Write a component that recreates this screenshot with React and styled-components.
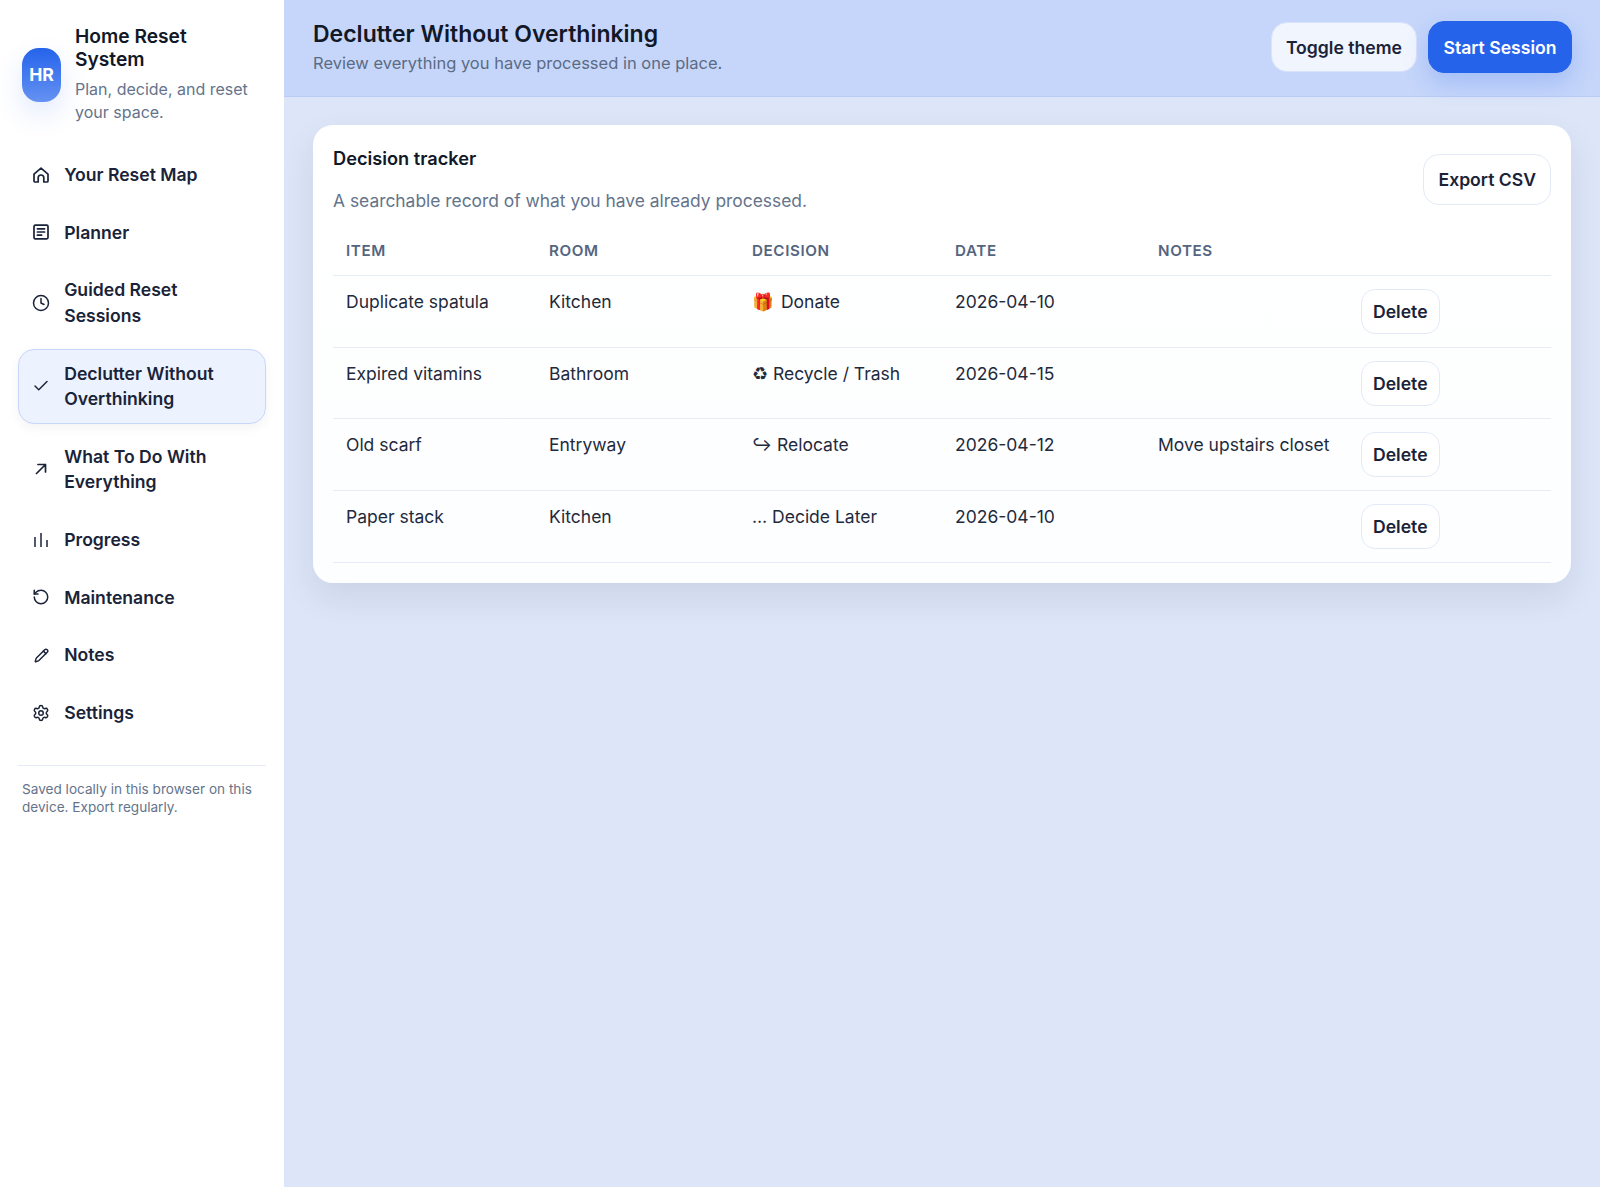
import React from 'react';
import styled, { createGlobalStyle } from 'styled-components';
import { Clock, Check, RotateCcw, Pencil, Settings } from 'lucide-react';

const GlobalStyle = createGlobalStyle`
  * { box-sizing: border-box; }
  html, body { margin: 0; padding: 0; }
  body {
    font-family: Inter, "Noto Sans", sans-serif;
    color: #0f172a;
    background: #dde6f8;
  }
`;

const Shell = styled.div`
  display: grid;
  grid-template-columns: 284px 1fr;
  min-height: 1187px;
`;

const Sidebar = styled.aside`
  background: #ffffff;
  padding: 25px 17.6px;
  display: flex;
  flex-direction: column;
`;

const Brand = styled.div`
  display: flex;
  align-items: center;
  gap: 14px;
  padding: 0 4.4px;
  margin-bottom: 26px;
`;

const LogoMark = styled.div`
  flex: 0 0 39px;
  height: 54px;
  border-radius: 17px;
  background: linear-gradient(180deg, #2563eb, #6592f2);
  box-shadow: 0 12px 28px rgba(37, 99, 235, 0.14);
  color: #fff;
  font-weight: 700;
  font-size: 17.6px;
  display: flex;
  align-items: center;
  justify-content: center;
`;

const BrandText = styled.div`
  max-width: 180px;
`;

const BrandTitle = styled.div`
  font-size: 19.2px;
  line-height: 23px;
  font-weight: 600;
  color: #111827;
`;

const BrandSub = styled.div`
  font-size: 16px;
  line-height: 23px;
  color: #64748b;
  margin-top: 7px;
`;

const Nav = styled.nav`
  display: flex;
  flex-direction: column;
  gap: 8.2px;
`;

const NavItem = styled.a`
  display: flex;
  align-items: center;
  gap: 14px;
  padding: 11px 13.6px;
  border-radius: 16px;
  border: 1px solid ${(p) => (p.$active ? '#c7d7fb' : 'transparent')};
  background: ${(p) => (p.$active ? '#ecf2fe' : 'transparent')};
  box-shadow: ${(p) => (p.$active ? '0 4px 12px rgba(15, 23, 42, 0.05)' : 'none')};
  font-size: 17.6px;
  line-height: 25.5px;
  font-weight: 600;
  color: #1a2338;
`;

const NavIcon = styled.span`
  flex: 0 0 18px;
  height: 18px;
  display: flex;
  align-items: center;
  justify-content: center;
`;

const SideFoot = styled.div`
  margin-top: 27px;
  border-top: 1px solid #e5ecf8;
  padding: 14px 4.4px 0;
  font-size: 13.6px;
  line-height: 18px;
  color: #64748b;
`;

const Main = styled.main`
  display: flex;
  flex-direction: column;
  min-width: 0;
`;

const Header = styled.header`
  height: 97px;
  background: #c6d6fa;
  border-bottom: 1px solid #b9ccf8;
  padding: 0 28px 3px 29px;
  display: flex;
  align-items: center;
  justify-content: space-between;
`;

const Title = styled.h1`
  margin: 0;
  font-size: 23px;
  line-height: 30px;
  font-weight: 600;
  color: #111827;
`;

const Subtitle = styled.p`
  margin: 3px 0 0;
  font-size: 16.5px;
  line-height: 22px;
  color: #5b6b84;
`;

const Actions = styled.div`
  display: flex;
  align-items: center;
  gap: 11px;
  margin-top: 1px;
`;

const Button = styled.button`
  font-family: inherit;
  font-weight: 600;
  font-size: 17.6px;
  height: 50px;
  padding: 0 14px;
  border-radius: 16px;
  color: #1a2338;
  background: #f1f5fe;
  border: 1px solid #d8e3fa;
`;

const PrimaryButton = styled(Button)`
  height: 52px;
  padding: 0 14.5px;
  color: #fff;
  background: #2563eb;
  border-color: #2563eb;
  box-shadow: 0 10px 24px rgba(37, 99, 235, 0.22);
`;

const Content = styled.div`
  padding: 28px 29px;
`;

const Card = styled.section`
  background: linear-gradient(180deg, #ffffff, #fdfeff);
  border-radius: 20px;
  padding: 20px;
  box-shadow: 0 14px 34px rgba(15, 23, 42, 0.09);
`;

const CardHead = styled.div`
  display: flex;
  justify-content: space-between;
  align-items: flex-start;
`;

const CardTitle = styled.h2`
  margin: 0;
  font-size: 18.2px;
  line-height: 26px;
  font-weight: 600;
  color: #111827;
`;

const CardSub = styled.p`
  margin: 18px 0 0;
  font-size: 17.4px;
  line-height: 24px;
  color: #64748b;
`;

const ExportButton = styled(Button)`
  margin-top: 9px;
  height: 51px;
  background: #fff;
  border-color: #e3eaf7;
`;

const Table = styled.table`
  width: 100%;
  table-layout: fixed;
  border-collapse: collapse;
  margin-top: 14px;
`;

const Th = styled.th`
  text-align: left;
  font-size: 15.2px;
  line-height: 20px;
  font-weight: 600;
  letter-spacing: 0.6px;
  color: #55657f;
  padding: 14px 13px;
  border-bottom: 1px solid #e5ecf8;
`;

const Td = styled.td`
  font-size: 17.5px;
  line-height: 24px;
  vertical-align: top;
  color: #1f2a3d;
  padding: 14px 13px 0;
  height: 71.7px;
  border-bottom: 1px solid #e5ecf8;
`;

const DeleteButton = styled(Button)`
  height: 45px;
  padding: 0 11px;
  margin-top: -1px;
  border-radius: 14px;
  background: #fff;
  border-color: #e3eaf7;
`;

const Emoji = styled.span`
  margin-right: 2px;
`;

const HomeIcon = () => (
  <svg width="18" height="18" viewBox="0 0 18 18" fill="none" stroke="currentColor" strokeWidth="1.7" strokeLinecap="round" strokeLinejoin="round">
    <path d="M2 8.2 9 2.2l7 6V15a1 1 0 0 1-1 1h-3.2v-4.2a2.8 2.8 0 0 0-5.6 0V16H3a1 1 0 0 1-1-1z" />
  </svg>
);

const ListIcon = () => (
  <svg width="18" height="18" viewBox="0 0 18 18" fill="none" stroke="currentColor" strokeWidth="1.7" strokeLinecap="round" strokeLinejoin="round">
    <rect x="2" y="2.2" width="14" height="13.6" rx="1.2" />
    <path d="M5.4 5.8h7.2M5.4 9h7.2M5.4 12.2h4.2" />
  </svg>
);

const ArrowIcon = () => (
  <svg width="18" height="18" viewBox="0 0 18 18" fill="none" stroke="currentColor" strokeWidth="1.7" strokeLinecap="round" strokeLinejoin="round">
    <path d="M4.5 13.5 13.5 4.5M6 4.5h7.5V12" />
  </svg>
);

const BarsIcon = () => (
  <svg width="18" height="18" viewBox="0 0 18 18" fill="none" stroke="currentColor" strokeWidth="1.5">
    <path d="M3 16V6M9 16V2M15 16V9" />
  </svg>
);

const navItems = [
  { label: 'Your Reset Map', icon: <HomeIcon /> },
  { label: 'Planner', icon: <ListIcon /> },
  { label: 'Guided Reset Sessions', icon: <Clock size={18} strokeWidth={2} /> },
  { label: 'Declutter Without Overthinking', icon: <Check size={18} strokeWidth={1.9} />, active: true },
  { label: 'What To Do With Everything', icon: <ArrowIcon /> },
  { label: 'Progress', icon: <BarsIcon /> },
  { label: 'Maintenance', icon: <RotateCcw size={18} strokeWidth={2} /> },
  { label: 'Notes', icon: <Pencil size={15} strokeWidth={2.3} /> },
  { label: 'Settings', icon: <Settings size={18} strokeWidth={2} /> },
];

const rows = [
  { item: 'Duplicate spatula', room: 'Kitchen', decision: <><Emoji>🎁</Emoji> Donate</>, date: '2026-04-10', notes: '' },
  { item: 'Expired vitamins', room: 'Bathroom', decision: '♻ Recycle / Trash', date: '2026-04-15', notes: '' },
  { item: 'Old scarf', room: 'Entryway', decision: '↪ Relocate', date: '2026-04-12', notes: 'Move upstairs closet' },
  { item: 'Paper stack', room: 'Kitchen', decision: '… Decide Later', date: '2026-04-10', notes: '' },
];

export default function App() {
  return (
    <>
      <GlobalStyle />
      <Shell>
        <Sidebar>
          <Brand>
            <LogoMark>HR</LogoMark>
            <BrandText>
              <BrandTitle>Home Reset System</BrandTitle>
              <BrandSub>Plan, decide, and reset your space.</BrandSub>
            </BrandText>
          </Brand>
          <Nav>
            {navItems.map((n) => (
              <NavItem key={n.label} $active={n.active}>
                <NavIcon>{n.icon}</NavIcon>
                <span>{n.label}</span>
              </NavItem>
            ))}
          </Nav>
          <SideFoot>Saved locally in this browser on this device. Export regularly.</SideFoot>
        </Sidebar>
        <Main>
          <Header>
            <div>
              <Title>Declutter Without Overthinking</Title>
              <Subtitle>Review everything you have processed in one place.</Subtitle>
            </div>
            <Actions>
              <Button>Toggle theme</Button>
              <PrimaryButton>Start Session</PrimaryButton>
            </Actions>
          </Header>
          <Content>
            <Card>
              <CardHead>
                <div>
                  <CardTitle>Decision tracker</CardTitle>
                  <CardSub>A searchable record of what you have already processed.</CardSub>
                </div>
                <ExportButton>Export CSV</ExportButton>
              </CardHead>
              <Table>
                <thead>
                  <tr>
                    <Th>ITEM</Th>
                    <Th>ROOM</Th>
                    <Th>DECISION</Th>
                    <Th>DATE</Th>
                    <Th>NOTES</Th>
                    <Th />
                  </tr>
                </thead>
                <tbody>
                  {rows.map((r) => (
                    <tr key={r.item}>
                      <Td>{r.item}</Td>
                      <Td>{r.room}</Td>
                      <Td>{r.decision}</Td>
                      <Td>{r.date}</Td>
                      <Td>{r.notes}</Td>
                      <Td>
                        <DeleteButton>Delete</DeleteButton>
                      </Td>
                    </tr>
                  ))}
                </tbody>
              </Table>
            </Card>
          </Content>
        </Main>
      </Shell>
    </>
  );
}
